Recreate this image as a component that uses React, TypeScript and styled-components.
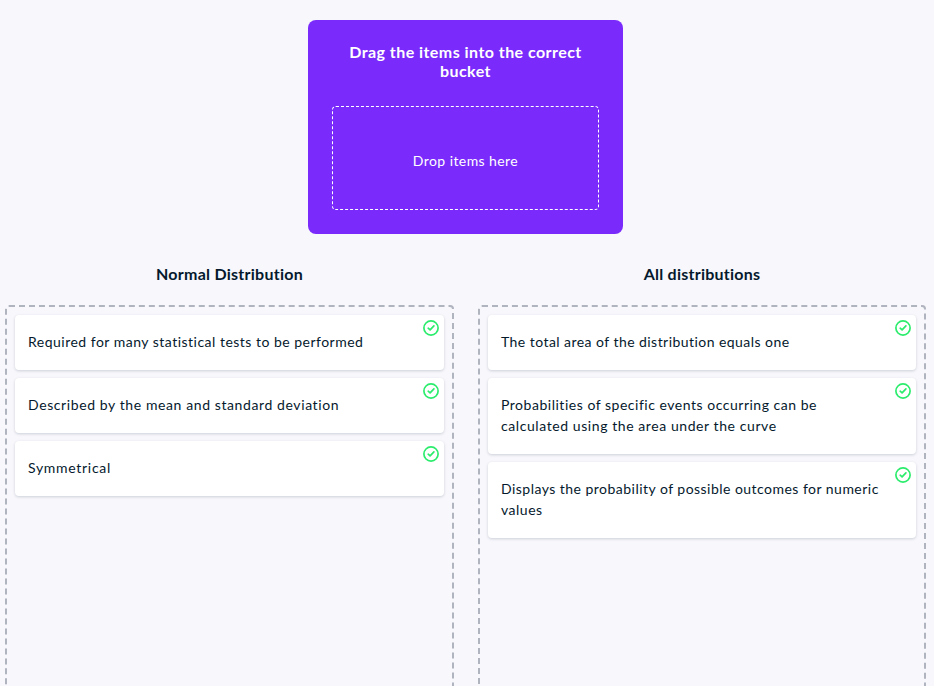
import React from 'react';
import styled, { createGlobalStyle } from 'styled-components';

const GlobalStyle = createGlobalStyle`
  *, *::before, *::after { box-sizing: border-box; }
  body {
    margin: 0;
    background: #f7f7fc;
    color: #05192d;
    font-family: Lato, "Open Sans", sans-serif;
    -webkit-font-smoothing: antialiased;
  }
`;

const Page = styled.main`
  display: flex;
  flex-direction: column;
  height: 686px;
  padding: 20px 8px 0 5px;
  overflow: hidden;
`;

const SourcePanel = styled.section`
  flex: none;
  align-self: center;
  width: 315px;
  height: 214px;
  margin-right: 1px;
  padding: 22px 24px 24px;
  border-radius: 8px;
  background: #7a2bfb;
  color: #fff;
`;

const PanelTitle = styled.h1`
  display: flex;
  flex-direction: column;
  align-items: center;
  height: 64px;
  margin: 0;
  padding-left: 1px;
  font-size: 16px;
  font-weight: 700;
  line-height: 19px;
`;

const DropZone = styled.div`
  display: flex;
  align-items: center;
  justify-content: center;
  height: 104px;
  padding: 4px 0 0 1px;
  border: 1px dashed #fff;
  border-radius: 4px;
  font-size: 14px;
  line-height: 21px;
`;

const Buckets = styled.div`
  display: grid;
  flex: none;
  grid-template-columns: 449px 448px;
  column-gap: 24px;
  margin-top: 30px;
`;

const BucketTitle = styled.h2`
  display: flex;
  justify-content: center;
  height: 41px;
  margin: 0;
  font-size: 16px;
  font-weight: 700;
  line-height: 20px;
`;

const BucketArea = styled.div`
  display: flex;
  flex-direction: column;
  gap: 8px;
  height: 472px;
  padding: 8px;
  border: 2px dashed #b0b4bf;
  border-radius: 4px;
`;

const Card = styled.article`
  position: relative;
  padding: 16px 13px 18px;
  border-radius: 4px;
  background: #fff;
  box-shadow: 0 1px 3px rgba(5, 25, 45, 0.17);
  font-size: 14px;
  line-height: 21px;
`;

const Line = styled.span<{ $tracking: number }>`
  display: block;
  width: max-content;
  letter-spacing: ${({ $tracking }) => $tracking}px;
`;

const CheckIcon = styled.svg`
  position: absolute;
  top: 5px;
  right: 5px;
  width: 16px;
  height: 16px;
  fill: none;
  stroke: #2bec6c;
  stroke-linecap: round;
  stroke-linejoin: round;
`;

type TextLine = [text: string, tracking: number];

const buckets: { title: TextLine; items: TextLine[][] }[] = [
  {
    title: ['Normal Distribution', 0.26],
    items: [
      [['Required for many statistical tests to be performed', 0.49]],
      [['Described by the mean and standard deviation', 0.6]],
      [['Symmetrical', 0.7]],
    ],
  },
  {
    title: ['All distributions', 0.24],
    items: [
      [['The total area of the distribution equals one', 0.45]],
      [
        ['Probabilities of specific events occurring can be', 0.52],
        ['calculated using the area under the curve', 0.58],
      ],
      [
        ['Displays the probability of possible outcomes for numeric', 0.47],
        ['values', 0.5],
      ],
    ],
  },
];

function Lines({ lines }: { lines: TextLine[] }) {
  return (
    <>
      {lines.map(([text, tracking]) => (
        <Line key={text} $tracking={tracking}>{text}</Line>
      ))}
    </>
  );
}

export default function App() {
  return (
    <>
      <GlobalStyle />
      <Page>
        <SourcePanel>
          <PanelTitle>
            <Lines lines={[['Drag the items into the correct', 0.45], ['bucket', 0.45]]} />
          </PanelTitle>
          <DropZone>
            <Lines lines={[['Drop items here', 0.42]]} />
          </DropZone>
        </SourcePanel>
        <Buckets>
          {buckets.map(({ title, items }) => (
            <section key={title[0]}>
              <BucketTitle><Lines lines={[title]} /></BucketTitle>
              <BucketArea>
                {items.map((lines) => (
                  <Card key={lines[0][0]}>
                    <Lines lines={lines} />
                    <CheckIcon viewBox="0 0 16 16" aria-label="Correct">
                      <circle cx="8" cy="8" r="7.1" strokeWidth="1.7" />
                      <path d="M5.2 8.2 7.1 9.9 10.9 5.9" strokeWidth="1.7" />
                    </CheckIcon>
                  </Card>
                ))}
              </BucketArea>
            </section>
          ))}
        </Buckets>
      </Page>
    </>
  );
}
